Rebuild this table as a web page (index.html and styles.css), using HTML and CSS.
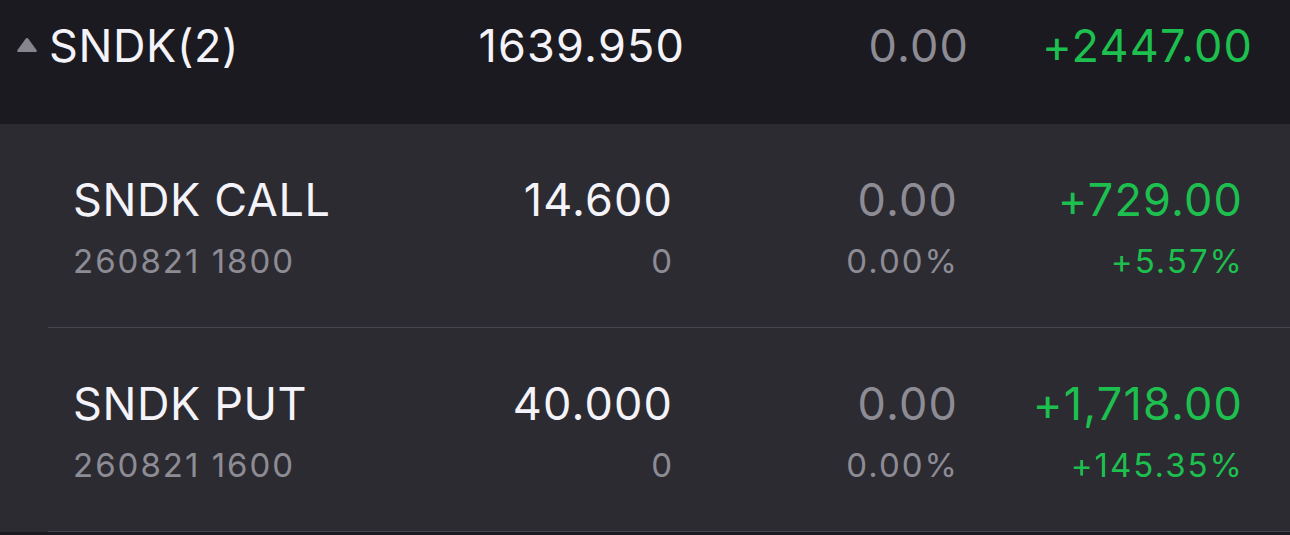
FILE: index.html
```html
<!DOCTYPE html>
<html>
<head>
<meta charset="utf-8">
<link rel="stylesheet" href="styles.css">
</head>
<body>
<div class="group">
  <div class="header">
    <div class="hname">
      <svg class="tri" width="22" height="16" viewBox="0 0 22 16"><path d="M9.3 2.2 Q11 0 12.7 2.2 L20.5 13 Q21.6 15 19.3 15 L2.7 15 Q0.4 15 1.5 13 Z" fill="#86858d"/></svg>
      <span>SNDK(2)</span>
    </div>
    <div class="num white">1639.950</div>
    <div class="num gray">0.00</div>
    <div class="num green">+2447.00</div>
  </div>
  <div class="items">
    <div class="item">
      <div class="cell">
        <div class="main label white">SNDK CALL</div>
        <div class="sub gray">260821 1800</div>
      </div>
      <div class="cell r">
        <div class="main white">14.600</div>
        <div class="sub gray">0</div>
      </div>
      <div class="cell r">
        <div class="main gray">0.00</div>
        <div class="sub gray">0.00%</div>
      </div>
      <div class="cell r">
        <div class="main green">+729.00</div>
        <div class="sub green">+5.57%</div>
      </div>
    </div>
    <div class="item">
      <div class="cell">
        <div class="main label white">SNDK PUT</div>
        <div class="sub gray">260821 1600</div>
      </div>
      <div class="cell r">
        <div class="main white">40.000</div>
        <div class="sub gray">0</div>
      </div>
      <div class="cell r">
        <div class="main gray">0.00</div>
        <div class="sub gray">0.00%</div>
      </div>
      <div class="cell r">
        <div class="main green">+1,718.00</div>
        <div class="sub green">+145.35%</div>
      </div>
    </div>
  </div>
  <div class="next"></div>
</div>
</body>
</html>
```
FILE: styles.css
```css
html, body {
  margin: 0;
  padding: 0;
  background: #2c2b32;
}
body {
  font-family: Inter, "Liberation Sans", Arial, sans-serif;
  width: 1290px;
  height: 535px;
  overflow: hidden;
}
.white { color: #f4f3f9; }
.gray { color: #8d8c95; }
.green { color: #1dbf4e; }

.header {
  height: 124px;
  background: #1b1a20;
  display: grid;
  grid-template-columns: 1fr 284px 284px 284px;
  padding: 20px 38px 0 16px;
  box-sizing: border-box;
  align-items: start;
  font-size: 45px;
  line-height: 52px;
}
.hname {
  display: flex;
  align-items: center;
  gap: 11px;
  color: #f4f3f9;
  letter-spacing: 0.6px;
}
.tri { flex: none; margin-top: -3px; }
.num {
  text-align: right;
  letter-spacing: 1.2px;
  margin-right: -1.2px;
}
.items {
  background: #2c2b32;
}
.item {
  height: 204px;
  display: grid;
  grid-template-columns: 1fr 285px 285px 285px;
  padding: 50px 48px 0 25px;
  box-sizing: border-box;
  border-bottom: 1px solid #47464e;
  margin-left: 48px;
}
.cell.r { text-align: right; }
.main {
  font-size: 45px;
  line-height: 52px;
  letter-spacing: 1.2px;
  margin-right: -1.2px;
}
.main.label {
  letter-spacing: 0.6px;
}
.sub {
  font-size: 33px;
  line-height: 40px;
  margin-top: 15px;
  letter-spacing: 2px;
  margin-right: -2px;
}
.next {
  height: 20px;
  background: #1b1a20;
}
```
